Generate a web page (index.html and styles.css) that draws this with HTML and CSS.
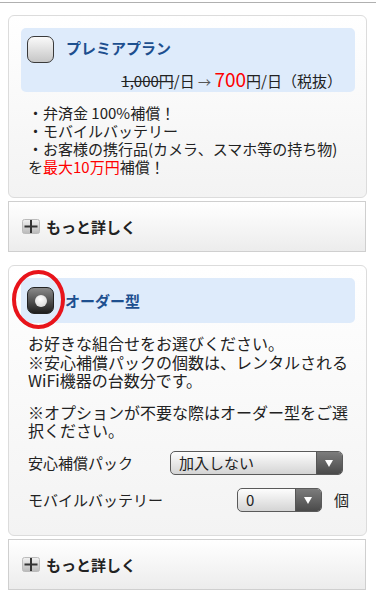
FILE: index.html
```html
<!DOCTYPE html>
<html lang="ja">
    <head>
        <meta charset="UTF-8">
        <meta name="viewport" content="width=device-width, initial-scale=1.0">
        <title>オプション選択</title>
        <link rel="stylesheet" href="styles.css">
    </head>
    <body>
        <div class="topbar"></div>

        <div class="plan">
            <div class="plan-head">
                <div class="plan-row">
                    <span class="check"></span>
                    <span class="plan-title">プレミアプラン</span>
                </div>
                <div class="price"><s>1,000円</s>/日 <span class="arrow">→</span> <span class="red big">700</span>円/日（税抜）</div>
            </div>
            <p class="plan-list">
                ・弁済金 100%補償！<br>
                ・モバイルバッテリー<br>
                ・お客様の携行品(カメラ、スマホ等の持ち物)<br>
                を<span class="red">最大10万円</span>補償！
            </p>
        </div>
        <div class="more">
            <svg class="plus" width="18" height="15" viewBox="0 0 18 15">
                <defs>
                    <linearGradient id="pg" x1="0" y1="0" x2="0" y2="1">
                        <stop offset="0" stop-color="#f2f2f2"/>
                        <stop offset="1" stop-color="#b9b9b9"/>
                    </linearGradient>
                </defs>
                <rect x="0.5" y="0.5" width="17" height="14" rx="2" fill="url(#pg)" stroke="#bbb"/>
                <rect x="2.5" y="6.5" width="13" height="2" fill="#333"/>
                <rect x="8" y="1" width="2" height="13" fill="#333"/>
            </svg>
            <span>もっと詳しく</span>
        </div>

        <div class="plan plan-order">
            <svg class="mark" width="53" height="59" viewBox="0 0 53 59">
                <ellipse cx="26.5" cy="29.5" rx="24.5" ry="27.5" fill="none" stroke="#e8141b" stroke-width="4"/>
            </svg>
            <div class="plan-head order-head">
                <span class="radio on"></span>
                <span class="plan-title">オーダー型</span>
            </div>
            <p class="order-text">お好きな組合せをお選びください。<br>※安心補償パックの個数は、レンタルされる<br>WiFi機器の台数分です。</p>
            <p class="order-text">※オプションが不要な際はオーダー型をご選<br>択ください。</p>
            <div class="opt-row">
                <span class="opt-label fixed">安心補償パック</span>
                <div class="select wide">
                    <span class="select-value">加入しない</span>
                    <span class="select-arrow"></span>
                </div>
            </div>
            <div class="opt-row right">
                <span class="opt-label">モバイルバッテリー</span>
                <div class="select narrow">
                    <span class="select-value">0</span>
                    <span class="select-arrow"></span>
                </div>
                <span class="unit">個</span>
            </div>
        </div>
        <div class="more">
            <svg class="plus" width="18" height="15" viewBox="0 0 18 15">
                <rect x="0.5" y="0.5" width="17" height="14" rx="2" fill="url(#pg)" stroke="#bbb"/>
                <rect x="2.5" y="6.5" width="13" height="2" fill="#333"/>
                <rect x="8" y="1" width="2" height="13" fill="#333"/>
            </svg>
            <span>もっと詳しく</span>
        </div>
    </body>
</html>
```

FILE: styles.css
```css
body {
    margin: 0;
    font-family: "Noto Sans CJK JP", "Noto Sans", sans-serif;
    color: #222;
    background: #fff;
}
.topbar {
    height: 2px;
    border-bottom: 1px solid #b0b0b0;
}

.plan {
    position: relative;
    width: 334px;
    margin: 12px 0 0 8px;
    padding: 12px 11px 21px 12px;
    border: 1px solid #dcdcdc;
    border-radius: 6px;
    background: linear-gradient(#fff, #f3f3f3);
}
.plan-head {
    background: #deebfb;
    border-radius: 5px;
    padding: 8px 13px 0 6px;
    height: 56px;
}
.plan-row {
    display: flex;
    gap: 12px;
}
.plan-title {
    font-size: 15px;
    font-weight: bold;
    color: #1d4f8f;
    line-height: 24px;
}
.check, .radio {
    flex: none;
    width: 25px;
    height: 25px;
    border: 1.5px solid #3a3a3a;
    border-radius: 7px;
    background: linear-gradient(#fafafa, #c6c6c6);
}
.radio.on {
    position: relative;
    background: linear-gradient(#8a8a8a, #1e1e1e);
    border-color: #222;
}
.radio.on::after {
    content: "";
    position: absolute;
    left: 6.5px;
    top: 6.5px;
    width: 12px;
    height: 12px;
    border-radius: 50%;
    background: radial-gradient(circle at 45% 35%, #fff, #cfcfcf);
}
.price {
    margin-top: 4px;
    text-align: right;
    font-size: 15px;
    line-height: 24px;
}
.arrow { color: #555; font-size: 13px; }
.red { color: #f00; }
.big { font-size: 19px; }
.plan-list {
    margin: 12px 0 0 7px;
    font-size: 15px;
    line-height: 18px;
}

.more {
    display: flex;
    align-items: center;
    gap: 6px;
    width: 343px;
    height: 49px;
    margin: 3px 0 0 8px;
    padding-left: 13px;
    border: 1px solid #cfcfcf;
    background: linear-gradient(#fff, #ececec);
    font-size: 15px;
    font-weight: bold;
}
.plus { flex: none; }

.plan-order {
    margin-top: 13px;
    padding-bottom: 23px;
}
.mark {
    position: absolute;
    left: 3px;
    top: 4px;
}
.order-head {
    display: flex;
    align-items: center;
    gap: 11px;
    height: 45px;
    padding: 0 0 0 6px;
}
.order-text {
    margin: 11px 0 0 7px;
    font-size: 16px;
    line-height: 18.5px;
    white-space: nowrap;
}
.order-text + .order-text { margin-top: 13px; }

.opt-row {
    display: flex;
    align-items: center;
    margin: 11px 0 0 7px;
    font-size: 15px;
}
.opt-row.right {
    margin-top: 13px;
    padding-right: 6px;
}
.opt-label { flex: 1; }
.opt-label.fixed { flex: 0 0 142px; }
.unit { margin-left: 12px; }

.select {
    display: flex;
    height: 22px;
    border: 1px solid #5a5a5a;
    border-radius: 5px;
    overflow: hidden;
    background: linear-gradient(#fdfdfd, #d4d4d4);
}
.select.wide { width: 171px; }
.select.narrow { width: 83px; }
.select-value {
    flex: 1;
    padding-left: 8px;
    font-size: 15px;
    line-height: 22px;
}
.select-arrow {
    position: relative;
    width: 25px;
    border-left: 1px solid #555;
    background: linear-gradient(#7c7c7c, #4a4a4a);
}
.select-arrow::after {
    content: "";
    position: absolute;
    left: 8px;
    top: 8px;
    border-left: 4.5px solid transparent;
    border-right: 4.5px solid transparent;
    border-top: 7px solid #fff;
}
```
